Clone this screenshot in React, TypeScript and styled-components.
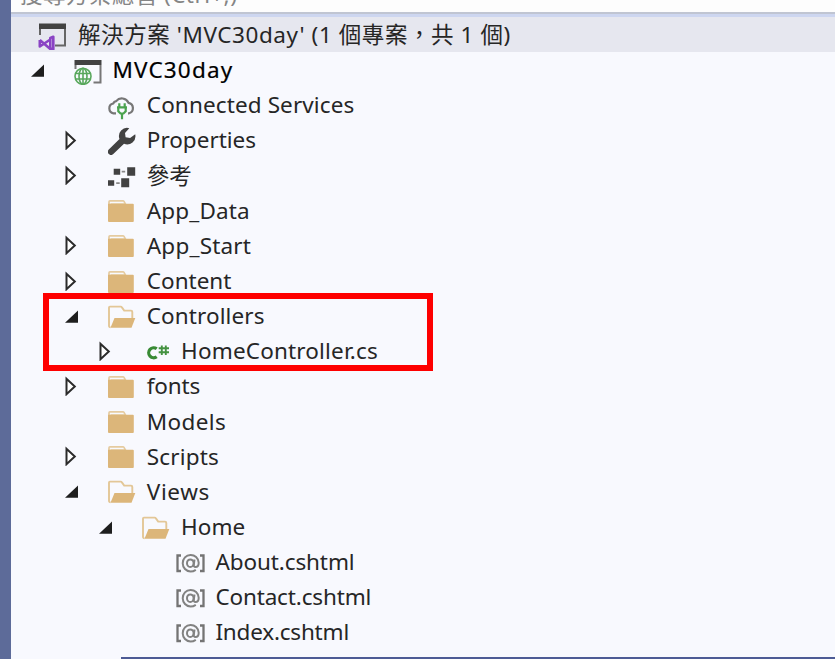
import type { ReactNode } from 'react'
import styled, { createGlobalStyle } from 'styled-components'

type IconName =
  | 'solution'
  | 'project'
  | 'cloud'
  | 'wrench'
  | 'references'
  | 'folder'
  | 'folderOpen'
  | 'csharp'
  | 'razor'

type Node = {
  label: string
  icon: IconName
  level: number
  state?: 'open' | 'closed'
  bold?: boolean
  tracking?: number
}

const solution: Node = {
  label: "解決方案 'MVC30day' (1 個專案，共 1 個)",
  icon: 'solution',
  level: 0,
  tracking: 0.58,
}

const before: Node[] = [
  {
    label: 'MVC30day',
    icon: 'project',
    level: 1,
    state: 'open',
    bold: true,
    tracking: 1.15,
  },
  { label: 'Connected Services', icon: 'cloud', level: 2, tracking: 0.12 },
  { label: 'Properties', icon: 'wrench', level: 2, state: 'closed' },
  { label: '參考', icon: 'references', level: 2, state: 'closed' },
  { label: 'App_Data', icon: 'folder', level: 2, tracking: 0.15 },
  {
    label: 'App_Start',
    icon: 'folder',
    level: 2,
    state: 'closed',
    tracking: 0.2,
  },
  { label: 'Content', icon: 'folder', level: 2, state: 'closed' },
]

const marked: Node[] = [
  {
    label: 'Controllers',
    icon: 'folderOpen',
    level: 2,
    state: 'open',
    tracking: 0.1,
  },
  {
    label: 'HomeController.cs',
    icon: 'csharp',
    level: 3,
    state: 'closed',
    tracking: 0.17,
  },
]

const after: Node[] = [
  {
    label: 'fonts',
    icon: 'folder',
    level: 2,
    state: 'closed',
    tracking: -0.2,
  },
  { label: 'Models', icon: 'folder', level: 2, tracking: 0.35 },
  {
    label: 'Scripts',
    icon: 'folder',
    level: 2,
    state: 'closed',
    tracking: 0.15,
  },
  {
    label: 'Views',
    icon: 'folderOpen',
    level: 2,
    state: 'open',
    tracking: 0.6,
  },
  { label: 'Home', icon: 'folderOpen', level: 3, state: 'open' },
  { label: 'About.cshtml', icon: 'razor', level: 4, tracking: -0.1 },
  { label: 'Contact.cshtml', icon: 'razor', level: 4, tracking: -0.15 },
  { label: 'Index.cshtml', icon: 'razor', level: 4, tracking: -0.2 },
]

const icons: Record<IconName, ReactNode> = {
  solution: (
    <>
      <path d="M2 3.500h27V9H2z" fill="#424242" />
      <path d="M3 9v6M28 9v16.500H18" fill="none" stroke="#666" strokeWidth="2" />
      <path
        d="M2.800 20v6.500l10.500-7v9.500L2.800 20M13.300 18l3-1.200v12.400l-3-1.200z"
        fill="none"
        stroke="#8a43c4"
        strokeWidth="2.600"
        strokeLinejoin="round"
      />
    </>
  ),
  project: (
    <>
      <path d="M.500 5H27.500v5H.500z" fill="#424242" />
      <path
        d="M1.500 10v4M26.500 10v17.500H19.500"
        fill="none"
        stroke="#777"
        strokeWidth="2"
      />
      <g fill="none" stroke="#58a75c" strokeWidth="1.600">
        <circle cx="9" cy="21.300" r="8" />
        <ellipse cx="9" cy="21.300" rx="4" ry="8" />
        <path d="M9 13.500v15.500M2 18.500h14.500M2 24h14.500" />
      </g>
    </>
  ),
  cloud: (
    <g transform="translate(-1 2.800)">
      <path
        d="M9 20.500H6.500a5 5 0 0 1-.3-9.800 4 4 0 0 1 3-2.400A7.300 7.300 0 0 1 21.500 10 5.400 5.400 0 0 1 22 20.500h-1"
        fill="none"
        stroke="#777"
        strokeWidth="2.200"
      />
      <path
        d="M12.300 10.500v4M17.700 10.500v4M10 14.500h10M11.300 15v3.500l2.200 2.200h3l2.200-2.200V15M15 21v5.500"
        fill="none"
        stroke="#4ba34f"
        strokeWidth="2.200"
      />
    </g>
  ),
  wrench: (
    <path
      transform="translate(-.300 2)"
      d="M27.500 7.200a8.300 8.300 0 0 1-11.200 9.600L5.600 27a3.100 3.100 0 0 1-4.500-4.400L11.800 12A8.200 8.200 0 0 1 21.600 1.200l-4.300 4.700.600 4.400 4.500.800z"
      fill="#424242"
    />
  ),
  references: (
    <g transform="translate(-.300 2.200)">
      <path
        d="M6 6.500h6.500v6H6zM0 18h6.500v5.500H0zM13.500 16h8v9h-8zM19.500 5h8v8.500h-8z"
        fill="#424242"
      />
      <path d="M14 9.500h3.500M8.500 21H12" stroke="#888" strokeWidth="1.800" />
    </g>
  ),
  folder: (
    <>
      <path
        d="M1 9V6.700q0-.900.900-.900H15q.600 0 1 .600l1.500 2.800h-15"
        fill="none"
        stroke="#e5cba0"
        strokeWidth="1.700"
      />
      <path
        d="M0 8.800h24.800q1 0 1 1V26q0 1-1 1H1q-1 0-1-1z"
        fill="#dcb67a"
      />
    </>
  ),
  folderOpen: (
    <>
      <path
        d="M2.500 26.200q-1.500 0-1.500-1.500V6.500q0-.900.900-.900h10.800q.700 0 1.200.800l2.300 3.200H23q1.300 0 1.300 1.300V17"
        fill="none"
        stroke="#e3c797"
        strokeWidth="1.900"
      />
      <path d="M6.500 17H27.300L23.500 26.800H2.500z" fill="#dcb67a" />
    </>
  ),
  csharp: (
    <>
      <path
        d="M14.200 12.800a5 5 0 1 0 0 8"
        fill="none"
        stroke="#388a34"
        strokeWidth="3.200"
        transform="translate(.500 0)"
      />
      <path
        d="M19.800 9.500v9.500M23.800 9.500v9.500M16.700 12.200h10.300M16.700 16.300h10.300"
        stroke="#449241"
        strokeWidth="1.900"
      />
    </>
  ),
  razor: (
    <>
      <path
        d="M5 8.500H1.500V24H5M24 8.500h3.500V24H24"
        fill="none"
        stroke="#747474"
        strokeWidth="2.300"
      />
      <g fill="none" stroke="#828282" strokeWidth="2">
        <path d="M19.800 22.800q-2.500 1.700-5.300 1.700a8 8.300 0 1 1 8.200-8.800q0 4.300-3.200 4.300-2 0-1.700-2.300l.700-5.200" />
        <ellipse cx="14.300" cy="16.200" rx="3.300" ry="3.800" />
      </g>
    </>
  ),
}

const TreeRow = ({ node }: { node: Node }) => (
  <Row $level={node.level}>
    {node.level > 0 && (
      <Twisty $wide={node.level === 3}>
        {node.state === 'closed' && (
          <svg width="13" height="20" viewBox="0 0 13 20">
            <path
              d="M1.500 2.800v15.400L9.800 10.500z"
              fill="#fff"
              stroke="#2b2b2b"
              strokeWidth="2"
            />
          </svg>
        )}
        {node.state === 'open' && (
          <svg width="13" height="20" viewBox="0 0 13 20">
            <path d="M13 4.500v12.300H0z" fill="#1e1e1e" />
          </svg>
        )}
      </Twisty>
    )}
    <Icon width="30" height="30" viewBox="0 0 30 30">
      {icons[node.icon]}
    </Icon>
    <Label $bold={node.bold} $tracking={node.tracking}>
      {node.label}
    </Label>
  </Row>
)

export default function App() {
  return (
    <>
      <GlobalStyle />
      <Window>
        <Panel>
          <Search>搜尋方案總管 (Ctrl+;)</Search>
          <Divider />
          <SolutionRow>
            <TreeRow node={solution} />
          </SolutionRow>
          {before.map(node => (
            <TreeRow key={node.label} node={node} />
          ))}
          <Marked>
            {marked.map(node => (
              <TreeRow key={node.label} node={node} />
            ))}
            <Highlight />
          </Marked>
          {after.map(node => (
            <TreeRow key={node.label} node={node} />
          ))}
          <BottomEdge />
        </Panel>
      </Window>
    </>
  )
}

const GlobalStyle = createGlobalStyle`
  body {
    margin: 0;
    overflow: hidden;
  }
`

const Window = styled.div`
  box-sizing: border-box;
  height: 659px;
  padding-left: 11px;
  overflow: hidden;
  background: #5d6b99;
  color: #262626;
  font-family: 'Noto Sans', 'Noto Sans CJK TC', sans-serif;
  font-size: 22.5px;
`

const Panel = styled.div`
  display: flex;
  flex-direction: column;
  height: 100%;
  background: #f8f9fe;
`

const Search = styled.div`
  display: flex;
  flex: none;
  align-items: flex-end;
  box-sizing: border-box;
  height: 12px;
  padding: 0 0 5px 9px;
  overflow: hidden;
  background: #fdfdfd;
  color: #858585;
  letter-spacing: 0.45px;
  line-height: 24px;
  white-space: nowrap;
`

const Divider = styled.div`
  flex: none;
  box-sizing: border-box;
  height: 5px;
  border-top: 2px solid #c0c5d2;
  background: #cdd6f0;
`

const SolutionRow = styled.div`
  flex: none;
  background: #e6e7ef;
`

const Row = styled.div<{ $level: number }>`
  display: flex;
  flex: none;
  align-items: center;
  height: 35.15px;
  padding-left: ${p => (p.$level ? 20 + (p.$level - 1) * 34.3 : 26)}px;

  &:has(> span:only-of-type) > span {
    margin-left: 2px;
  }
`

const Twisty = styled.span<{ $wide?: boolean }>`
  display: flex;
  flex: none;
  width: ${p => (p.$wide ? 43.5 : 42.5)}px;
  margin-left: ${p => (p.$wide ? -1 : 0)}px;
`

const Icon = styled.svg`
  flex: none;
  width: 30px;
  margin-right: 9px;
`

const Label = styled.span<{ $bold?: boolean; $tracking?: number }>`
  color: ${p => (p.$bold ? '#000' : 'inherit')};
  letter-spacing: ${p => p.$tracking ?? 0}px;
  line-height: 35px;
  white-space: nowrap;
  -webkit-text-stroke: ${p => (p.$bold ? '0.2px #000' : '0')};
`

const Marked = styled.div`
  position: relative;
  flex: none;
`

const Highlight = styled.div`
  position: absolute;
  top: -5px;
  left: 32px;
  box-sizing: border-box;
  width: 390px;
  height: 78px;
  border: 6px solid #fe0000;
`

const BottomEdge = styled.div`
  flex: none;
  height: 2px;
  margin: 7px 0 0 110px;
  background: #4d5b95;
`
